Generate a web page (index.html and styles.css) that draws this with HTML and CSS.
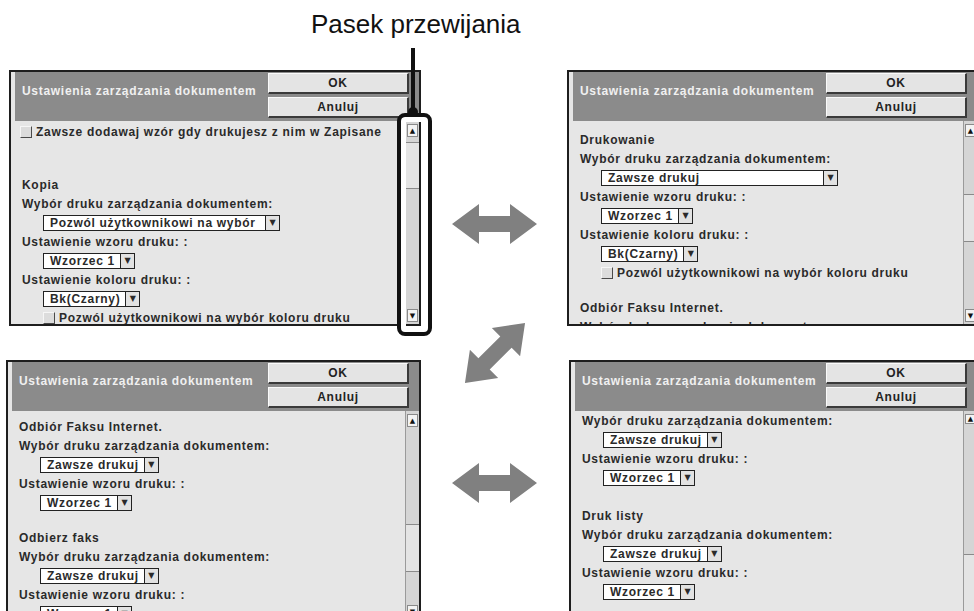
FILE: index.html
```html
<!DOCTYPE html>
<html lang="pl">
<head>
  <meta charset="UTF-8">
  <meta name="viewport" content="width=device-width, initial-scale=1.0">
  <title>Pasek przewijania</title>
  <link rel="stylesheet" href="styles.css">
</head>
<body>
  <header class="caption">Pasek przewijania</header>

  <div class="screens">
    <!-- callout pointing at the scroll bar -->
    <div class="callout-line"></div>
    <div class="callout-box"></div>

    <!-- top left -->
    <div class="panel panel-tl">
      <div class="panel-head">
        <span class="panel-title">Ustawienia zarządzania dokumentem</span>
        <div class="panel-buttons">
          <button class="btn">OK</button>
          <button class="btn">Anuluj</button>
        </div>
      </div>
      <div class="panel-main">
        <div class="panel-body pad-1">
          <div class="row"><span class="box box-first"></span>Zawsze dodawaj wzór gdy drukujesz z nim w Zapisane</div>
          <div class="gap gap-34"></div>
          <div class="row">Kopia</div>
          <div class="row">Wybór druku zarządzania dokumentem:</div>
          <div class="row"><span class="select select-wide"><span class="select-text">Pozwól użytkownikowi na wybór</span><span class="select-btn">▼</span></span></div>
          <div class="row">Ustawienie wzoru druku: :</div>
          <div class="row"><span class="select"><span class="select-text">Wzorzec 1</span><span class="select-btn">▼</span></span></div>
          <div class="row">Ustawienie koloru druku: :</div>
          <div class="row"><span class="select"><span class="select-text">Bk(Czarny)</span><span class="select-btn">▼</span></span></div>
          <div class="row"><span class="box box-indent"></span>Pozwól użytkownikowi na wybór koloru druku</div>
        </div>
        <div class="scrollbar">
          <span class="sb-arrow">▲</span>
          <span class="sb-track"><span class="sb-thumb" style="margin-top: 3px; height: 45px"></span></span>
          <span class="sb-arrow">▼</span>
        </div>
      </div>
    </div>

    <!-- arrows between the screens -->
    <svg class="arrows" viewBox="0 0 146 550" width="146" height="550">
      <defs>
        <polygon id="dbl-arrow" points="0,20 27,0 27,12 58,12 58,0 85,20 58,40 58,28 27,28 27,40"/>
      </defs>
      <use href="#dbl-arrow" transform="translate(31 134)"/>
      <use href="#dbl-arrow" transform="translate(74 283) rotate(-45) translate(-42.5 -20)"/>
      <use href="#dbl-arrow" transform="translate(31 393)"/>
    </svg>

    <!-- top right -->
    <div class="panel panel-tr">
      <div class="panel-head">
        <span class="panel-title">Ustawienia zarządzania dokumentem</span>
        <div class="panel-buttons">
          <button class="btn">OK</button>
          <button class="btn">Anuluj</button>
        </div>
      </div>
      <div class="panel-main">
        <div class="panel-body pad-9">
          <div class="row">Drukowanie</div>
          <div class="row">Wybór druku zarządzania dokumentem:</div>
          <div class="row"><span class="select select-wide"><span class="select-text">Zawsze drukuj</span><span class="select-btn">▼</span></span></div>
          <div class="row">Ustawienie wzoru druku: :</div>
          <div class="row"><span class="select"><span class="select-text">Wzorzec 1</span><span class="select-btn">▼</span></span></div>
          <div class="row">Ustawienie koloru druku: :</div>
          <div class="row"><span class="select"><span class="select-text">Bk(Czarny)</span><span class="select-btn">▼</span></span></div>
          <div class="row"><span class="box box-indent"></span>Pozwól użytkownikowi na wybór koloru druku</div>
          <div class="gap gap-16"></div>
          <div class="row">Odbiór Faksu Internet.</div>
          <div class="row">Wybór druku zarządzania dokumentem:</div>
        </div>
        <div class="scrollbar">
          <span class="sb-arrow">▲</span>
          <span class="sb-track"><span class="sb-thumb" style="margin-top: 55px; height: 46px"></span></span>
          <span class="sb-arrow">▼</span>
        </div>
      </div>
    </div>

    <!-- bottom left -->
    <div class="panel panel-bl">
      <div class="panel-head">
        <span class="panel-title">Ustawienia zarządzania dokumentem</span>
        <div class="panel-buttons">
          <button class="btn">OK</button>
          <button class="btn">Anuluj</button>
        </div>
      </div>
      <div class="panel-main">
        <div class="panel-body pad-6">
          <div class="row">Odbiór Faksu Internet.</div>
          <div class="row">Wybór druku zarządzania dokumentem:</div>
          <div class="row"><span class="select"><span class="select-text">Zawsze drukuj</span><span class="select-btn">▼</span></span></div>
          <div class="row">Ustawienie wzoru druku: :</div>
          <div class="row"><span class="select"><span class="select-text">Wzorzec 1</span><span class="select-btn">▼</span></span></div>
          <div class="gap gap-16"></div>
          <div class="row">Odbierz faks</div>
          <div class="row">Wybór druku zarządzania dokumentem:</div>
          <div class="row"><span class="select"><span class="select-text">Zawsze drukuj</span><span class="select-btn">▼</span></span></div>
          <div class="row">Ustawienie wzoru druku: :</div>
          <div class="row"><span class="select"><span class="select-text">Wzorzec 1</span><span class="select-btn">▼</span></span></div>
        </div>
        <div class="scrollbar">
          <span class="sb-arrow">▲</span>
          <span class="sb-track"><span class="sb-thumb" style="margin-top: 95px; height: 46px"></span></span>
          <span class="sb-arrow">▼</span>
        </div>
      </div>
    </div>

    <!-- bottom right -->
    <div class="panel panel-br">
      <div class="panel-head">
        <span class="panel-title">Ustawienia zarządzania dokumentem</span>
        <div class="panel-buttons">
          <button class="btn">OK</button>
          <button class="btn">Anuluj</button>
        </div>
      </div>
      <div class="panel-main">
        <div class="panel-body">
          <div class="row">Wybór druku zarządzania dokumentem:</div>
          <div class="row"><span class="select"><span class="select-text">Zawsze drukuj</span><span class="select-btn">▼</span></span></div>
          <div class="row">Ustawienie wzoru druku: :</div>
          <div class="row"><span class="select"><span class="select-text">Wzorzec 1</span><span class="select-btn">▼</span></span></div>
          <div class="gap gap-19"></div>
          <div class="row">Druk listy</div>
          <div class="row">Wybór druku zarządzania dokumentem:</div>
          <div class="row"><span class="select"><span class="select-text">Zawsze drukuj</span><span class="select-btn">▼</span></span></div>
          <div class="row">Ustawienie wzoru druku: :</div>
          <div class="row"><span class="select"><span class="select-text">Wzorzec 1</span><span class="select-btn">▼</span></span></div>
        </div>
        <div class="scrollbar">
          <span class="sb-arrow">▲</span>
          <span class="sb-track"><span class="sb-thumb" style="margin-top: 128px; height: 60px"></span></span>
          <span class="sb-arrow">▼</span>
        </div>
      </div>
    </div>
  </div>
</body>
</html>
```

FILE: styles.css
```css
html,
body {
  margin: 0;
  padding: 0;
  overflow: hidden;
}
body {
  width: 974px;
  height: 611px;
  background: #fff;
  color: #2a2a2a;
  font-family: "Liberation Sans", Arial, sans-serif;
}
.caption {
  height: 70px;
  box-sizing: border-box;
  padding: 9px 0 0 311px;
  font-size: 26px;
  line-height: 30px;
  color: #111;
}
.screens {
  position: relative;
  display: grid;
  grid-template-columns: 412px 146px 412px;
  grid-template-rows: 256px 262px;
  row-gap: 34px;
  padding-left: 9px;
}

/* callout */
.callout-line {
  position: absolute;
  left: 411px;
  top: -22px;
  width: 4px;
  height: 65px;
  background: #111;
  z-index: 2;
}
.callout-line::after {
  content: "";
  position: absolute;
  left: -3px;
  bottom: -4px;
  width: 10px;
  height: 10px;
  border-radius: 50%;
  background: #111;
}
.callout-box {
  position: absolute;
  left: 397px;
  top: 43px;
  width: 35px;
  height: 223px;
  box-sizing: border-box;
  border: 4px solid #111;
  border-radius: 8px;
  box-shadow: inset 0 0 0 5px #fff;
  z-index: 1;
}

/* arrows */
.arrows {
  grid-column: 2;
  grid-row: 1 / 3;
  fill: #808080;
}

/* panels */
.panel {
  display: flex;
  flex-direction: column;
  box-sizing: border-box;
  border: 2px solid #1e1e1e;
  background: #e6e6e6;
  overflow: hidden;
  font-size: 12px;
  font-weight: bold;
  letter-spacing: 0.7px;
}
.panel-tl {
  grid-column: 1;
  grid-row: 1;
}
.panel-tr {
  grid-column: 3;
  grid-row: 1;
}
.panel-bl {
  grid-column: 1;
  grid-row: 2;
  margin-left: -3px;
}
.panel-br {
  grid-column: 3;
  grid-row: 2;
  margin-left: 2px;
}
.panel-head {
  display: flex;
  flex: none;
  height: 49px;
  box-sizing: border-box;
  margin-left: 4px;
  padding: 1px 10px 0 7px;
  background: #8b8b8b;
}
.panel-title {
  padding-top: 11px;
  line-height: 14px;
  color: #f0f0f0;
  white-space: nowrap;
}
.panel-buttons {
  display: flex;
  flex-direction: column;
  gap: 3px;
  width: 141px;
  margin-left: auto;
}
.btn {
  height: 21px;
  padding: 0;
  background: #e4e4e4;
  border-style: solid;
  border-width: 1px 2px 2px 1px;
  border-color: #fafafa #3a3a3a #3a3a3a #fafafa;
  color: #222;
  font: inherit;
  letter-spacing: inherit;
}
.panel-main {
  display: flex;
  flex: 1;
  min-height: 0;
}
.panel-body {
  flex: 1;
  padding-left: 11px;
  overflow: hidden;
}
.pad-1 { padding-top: 1px; }
.pad-6 { padding-top: 6px; }
.pad-9 { padding-top: 9px; }

.row {
  display: flex;
  align-items: center;
  height: 19px;
  white-space: nowrap;
}
.gap-16 { height: 16px; }
.gap-19 { height: 19px; }
.gap-34 { height: 34px; }

.select {
  display: inline-flex;
  height: 16px;
  box-sizing: border-box;
  margin-left: 21px;
  border: 1px solid #222;
  background: #fff;
}
.select-wide {
  width: 237px;
}
.select-text {
  flex: 1;
  padding: 0 5px 0 6px;
  line-height: 14px;
}
.select-btn {
  display: flex;
  align-items: center;
  justify-content: center;
  width: 13px;
  border-left: 1px solid #222;
  background: #e2e2e2;
  font-family: "DejaVu Sans", sans-serif;
  font-size: 8px;
  font-weight: normal;
  letter-spacing: 0;
}
.box {
  width: 12px;
  height: 12px;
  box-sizing: border-box;
  margin-right: 4px;
  background: #dcdcdc;
  border: 1px solid;
  border-color: #f6f6f6 #4a4a4a #4a4a4a #f6f6f6;
}
.box-first {
  margin-left: -2px;
}
.box-indent {
  margin-left: 21px;
}

/* scroll bar */
.scrollbar {
  display: flex;
  flex-direction: column;
  flex: none;
  width: 13px;
  border-left: 1px solid #9a9a9a;
  background: #d5d5d5;
}
.sb-arrow {
  display: flex;
  align-items: center;
  justify-content: center;
  height: 13px;
  margin: 3px 1px 2px;
  box-sizing: border-box;
  border: 1px solid #8a8a8a;
  background: #f3f3f3;
  font-family: "DejaVu Sans", sans-serif;
  font-size: 7px;
  font-weight: normal;
  letter-spacing: 0;
  color: #111;
}
.sb-track {
  display: flex;
  flex-direction: column;
  flex: 1;
}
.sb-thumb {
  flex: none;
  border-top: 1px solid #8a8a8a;
  border-bottom: 1px solid #8a8a8a;
  background: #e4e4e4;
}
```
